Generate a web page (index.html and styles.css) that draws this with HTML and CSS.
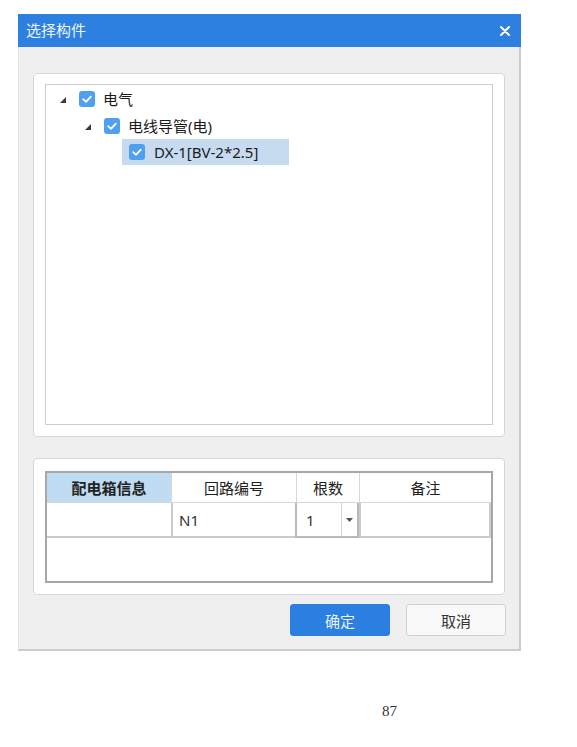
FILE: index.html
```html
<!DOCTYPE html>
<html lang="zh-CN">
<head>
<meta charset="utf-8">
<title>选择构件</title>
<link rel="stylesheet" href="styles.css">
</head>
<body>
<div class="page">
  <div class="dialog">
    <div class="titlebar">
      <span class="title">选择构件</span>
      <svg class="close" width="10" height="10" viewBox="0 0 10 10"><path d="M1 1 L9 9 M9 1 L1 9" stroke="#fff" stroke-width="2" stroke-linecap="round"/></svg>
    </div>
    <div class="body">
      <div class="panel tree-panel">
        <div class="tree">
          <div class="row lvl0">
            <span class="exp"><svg width="6" height="6" viewBox="0 0 6 6"><polygon points="6,0 6,6 0,6" fill="#3a3a3a"/></svg></span>
            <span class="node">
              <span class="cb"><svg width="16" height="16" viewBox="0 0 16 16"><path d="M4.2 8.2 L7 10.8 L11.8 5.6" fill="none" stroke="#fff" stroke-width="1.8" stroke-linecap="round" stroke-linejoin="round"/></svg></span>
              <span class="label">电气</span>
            </span>
          </div>
          <div class="row lvl1">
            <span class="exp"><svg width="6" height="6" viewBox="0 0 6 6"><polygon points="6,0 6,6 0,6" fill="#3a3a3a"/></svg></span>
            <span class="node">
              <span class="cb"><svg width="16" height="16" viewBox="0 0 16 16"><path d="M4.2 8.2 L7 10.8 L11.8 5.6" fill="none" stroke="#fff" stroke-width="1.8" stroke-linecap="round" stroke-linejoin="round"/></svg></span>
              <span class="label">电线导管(电)</span>
            </span>
          </div>
          <div class="row lvl2 selected">
            <span class="exp"></span>
            <span class="node">
              <span class="cb"><svg width="16" height="16" viewBox="0 0 16 16"><path d="M4.2 8.2 L7 10.8 L11.8 5.6" fill="none" stroke="#fff" stroke-width="1.8" stroke-linecap="round" stroke-linejoin="round"/></svg></span>
              <span class="label">DX-1[BV-2*2.5]</span>
            </span>
          </div>
        </div>
      </div>
      <div class="panel grid-panel">
        <div class="grid">
          <div class="grow head">
            <div class="hc first">配电箱信息</div>
            <div class="hc">回路编号</div>
            <div class="hc">根数</div>
            <div class="hc">备注</div>
          </div>
          <div class="grow data">
            <div class="dc"></div>
            <div class="dc text">N1</div>
            <div class="dc combo">
              <span class="combo-val">1</span>
              <span class="combo-btn"><svg width="7" height="4" viewBox="0 0 7 4"><polygon points="0,0 7,0 3.5,4" fill="#555"/></svg></span>
            </div>
            <div class="dc last"></div>
          </div>
        </div>
      </div>
      <div class="buttons">
        <button class="btn primary">确定</button>
        <button class="btn">取消</button>
      </div>
    </div>
  </div>
  <div class="pagenum">87</div>
</div>
</body>
</html>
```

FILE: styles.css
```css
html, body {
  margin: 0;
  padding: 0;
  background: #ffffff;
}
body {
  font-family: "Noto Sans", "Noto Sans CJK SC", sans-serif;
  font-size: 15px;
  color: #1a1a1a;
}
.page {
  padding: 14px 0 0 18px;
}
.dialog {
  width: 503px;
  box-sizing: border-box;
  border-left: 1px solid #e2e4e8;
  border-right: 2px solid #c9ccd3;
  border-bottom: 2px solid #c9ccd3;
  background: #efefef;
}
.titlebar {
  height: 33px;
  background: #2d80e0;
  display: flex;
  align-items: center;
  justify-content: space-between;
  padding: 0 11px 0 8px;
  margin-left: -1px;
  margin-right: -2px;
}
.title {
  color: #eef4fc;
  font-size: 15px;
  line-height: 33px;
}
.close {
  display: block;
}
.body {
  padding: 26px 14px 13px 14px;
  display: flex;
  flex-direction: column;
}
.panel {
  background: #ffffff;
  border: 1px solid #d6d6d6;
  border-radius: 4px;
  box-sizing: border-box;
}
.tree-panel {
  height: 364px;
  padding: 10px 11px 11px 11px;
  display: flex;
}
.tree {
  flex: 1;
  border: 1px solid #cdcdcd;
  background: #ffffff;
}
.row {
  display: flex;
  align-items: center;
  height: 27px;
}
.row.lvl0 { padding-left: 14px; }
.row.lvl1 { padding-left: 39px; }
.row.lvl2 { padding-left: 64px; height: 26px; }
.exp {
  width: 6px;
  height: 6px;
  margin-right: 13px;
  margin-top: 3px;
  display: block;
}
.exp svg { display: block; }
.node {
  display: flex;
  align-items: center;
  height: 100%;
}
.cb {
  width: 16px;
  height: 16px;
  border-radius: 3px;
  background: #4f9ff2;
  display: block;
  margin-right: 8px;
}
.cb svg { display: block; }
.label {
  line-height: 20px;
  white-space: nowrap;
}
.selected .node {
  background: #c7dbf0;
  margin-left: -7px;
  padding: 0 31px 0 7px;
}
.selected .cb { margin-right: 9px; }
.grid-panel {
  margin-top: 21px;
  height: 137px;
  padding: 12px 11px 11px 11px;
}
.grid {
  height: 112px;
  box-sizing: border-box;
  border: 2px solid #a7a7a7;
  background: #ffffff;
}
.grow {
  display: grid;
  grid-template-columns: 124px 125px 63px 1fr;
}
.head {
  height: 30px;
}
.hc {
  display: flex;
  align-items: center;
  justify-content: center;
  border-left: 1px solid #d8d8d8;
  border-bottom: 1px solid #d8d8d8;
  color: #222;
}
.hc.first {
  border-left: none;
  background: #bfdcf3;
  font-weight: 700;
}
.data {
  height: 35px;
}
.dc {
  border-left: 2px solid #cbcbcb;
  border-bottom: 2px solid #cbcbcb;
  display: flex;
  align-items: center;
}
.dc:first-child { border-left: none; }
.dc.last { border-right: 2px solid #cbcbcb; }
.dc.text {
  padding-left: 6px;
  color: #333;
}
.dc.combo {
  border: 2px solid #b9b9b9;
  border-top: none;
  margin-left: -1px;
  background: #fff;
  align-items: stretch;
}
.combo-val {
  flex: 1;
  display: flex;
  align-items: center;
  padding-left: 9px;
  color: #333;
  border-right: 1px solid #d4d4d4;
}
.combo-btn {
  width: 15px;
  display: flex;
  align-items: center;
  justify-content: center;
}
.combo-btn svg { display: block; }
.buttons {
  display: flex;
  justify-content: flex-end;
  gap: 16px;
  margin-top: 9px;
  margin-right: -1px;
}
.btn {
  width: 100px;
  height: 32px;
  box-sizing: border-box;
  border-radius: 3px;
  font-family: "Noto Sans", "Noto Sans CJK SC", sans-serif;
  font-size: 15px;
  border: 1px solid #cfcfcf;
  background: #f9f9f9;
  color: #333;
  padding: 0;
}
.btn.primary {
  background: #2b7fe0;
  border-color: #2b7fe0;
  color: #eaf2fd;
}
.pagenum {
  font-family: "Liberation Serif", "Times New Roman", serif;
  font-size: 15px;
  color: #333;
  margin-top: 52px;
  padding-left: 364px;
}
```
